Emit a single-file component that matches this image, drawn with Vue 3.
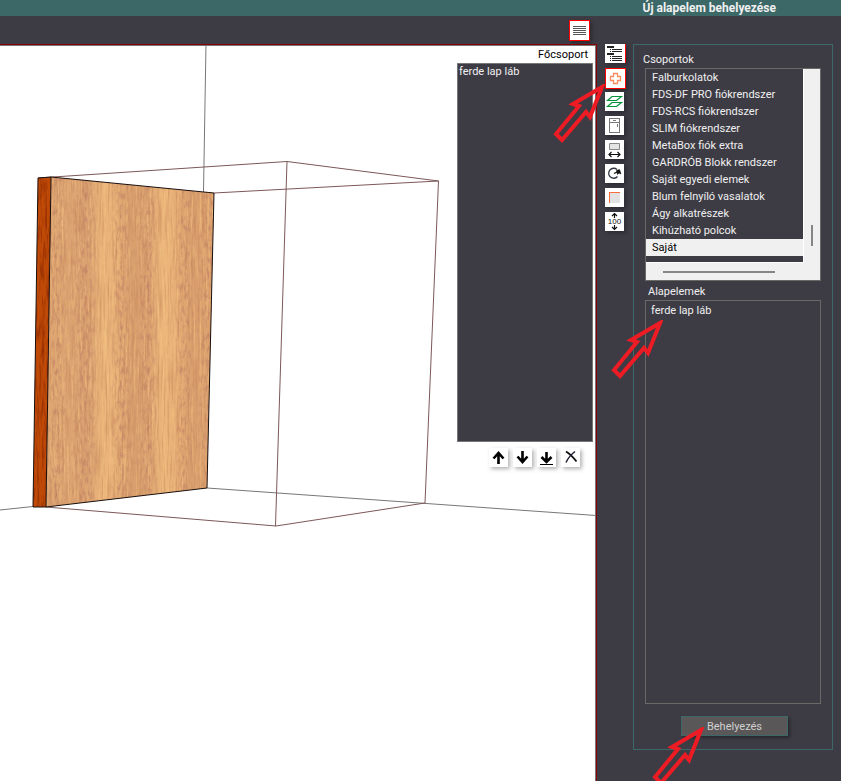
<script setup>
import { ref } from 'vue'

const groups = [
  'Falburkolatok',
  'FDS-DF PRO fiókrendszer',
  'FDS-RCS fiókrendszer',
  'SLIM fiókrendszer',
  'MetaBox fiók extra',
  'GARDRÓB Blokk rendszer',
  'Saját egyedi elemek',
  'Blum felnyíló vasalatok',
  'Ágy alkatrészek',
  'Kihúzható polcok',
  'Saját',
]
const selected = ref('Saját')
const pointer = 'M49 3 L20 20 L26 22 L3 50 L9 56 L33 28 L37 33 Z'
</script>

<template>
  <div class="app">
    <header class="title-bar"><h1>Új alapelem behelyezése</h1></header>

    <div class="toolbar">
      <button class="tool framed" type="button" aria-label="Menü">
        <svg viewBox="0 0 19 19" shape-rendering="crispEdges">
          <path d="M3 5.5h13M3 7.5h13M3 9.5h13M3 11.5h13M3 13.5h13" stroke="#555" />
        </svg>
      </button>
    </div>

    <main class="work">
      <section class="viewport">
        <svg class="scene" viewBox="0 46 595 735" preserveAspectRatio="xMinYMin slice">
          <defs>
            <linearGradient id="oak" x1="46" x2="214" y1="0" y2="0" gradientUnits="userSpaceOnUse">
              <stop offset="0" stop-color="#dfa872" />
              <stop offset=".13" stop-color="#dda572" />
              <stop offset=".25" stop-color="#d9a070" />
              <stop offset=".35" stop-color="#edb87c" />
              <stop offset=".41" stop-color="#e8b178" />
              <stop offset=".5" stop-color="#d89f6d" />
              <stop offset=".61" stop-color="#dba270" />
              <stop offset=".7" stop-color="#eeb97c" />
              <stop offset=".77" stop-color="#e8b077" />
              <stop offset=".86" stop-color="#d99f6d" />
              <stop offset="1" stop-color="#dfa570" />
            </linearGradient>
            <linearGradient id="bands" x1="46" x2="214" y1="0" y2="0" gradientUnits="userSpaceOnUse">
              <stop offset="0" stop-color="#fff" stop-opacity=".2" />
              <stop offset=".06" stop-color="#fff" stop-opacity=".8" />
              <stop offset=".13" stop-color="#fff" stop-opacity=".2" />
              <stop offset=".24" stop-color="#fff" stop-opacity=".8" />
              <stop offset=".31" stop-color="#fff" stop-opacity=".1" />
              <stop offset=".38" stop-color="#fff" stop-opacity=".1" />
              <stop offset=".45" stop-color="#fff" stop-opacity=".8" />
              <stop offset=".53" stop-color="#fff" stop-opacity=".2" />
              <stop offset=".61" stop-color="#fff" stop-opacity=".8" />
              <stop offset=".67" stop-color="#fff" stop-opacity=".1" />
              <stop offset=".76" stop-color="#fff" stop-opacity=".1" />
              <stop offset=".82" stop-color="#fff" stop-opacity=".8" />
              <stop offset=".89" stop-color="#fff" stop-opacity=".2" />
              <stop offset=".97" stop-color="#fff" stop-opacity=".8" />
            </linearGradient>
            <mask id="band-mask"><rect x="44" y="175" width="172" height="334" fill="url(#bands)" /></mask>
            <filter id="grain" x="0" y="0" width="100%" height="100%" color-interpolation-filters="sRGB">
              <feTurbulence type="fractalNoise" baseFrequency=".4 .12" numOctaves="3" seed="8" />
              <feColorMatrix values="0 0 0 0 .75  0 0 0 0 .5  0 0 0 0 .39  3 0 0 0 -1.35" />
            </filter>
            <filter id="fibre" x="0" y="0" width="100%" height="100%" color-interpolation-filters="sRGB">
              <feTurbulence type="fractalNoise" baseFrequency=".5 .025" numOctaves="2" seed="21" result="n" />
              <feColorMatrix in="n" values="0 0 0 0 .97  0 0 0 0 .78  0 0 0 0 .52  1.6 0 0 0 -.75" result="light" />
              <feColorMatrix in="n" values="0 0 0 0 .78  0 0 0 0 .53  0 0 0 0 .36  0 1.6 0 0 -.75" result="dark" />
              <feMerge><feMergeNode in="light" /><feMergeNode in="dark" /></feMerge>
            </filter>
            <filter id="edge-grain" x="0" y="0" width="100%" height="100%" color-interpolation-filters="sRGB">
              <feTurbulence type="fractalNoise" baseFrequency=".4 .05" numOctaves="3" seed="4" />
              <feColorMatrix values="0 0 0 0 .5  0 0 0 0 .13  0 0 0 0 0  1.8 0 0 0 -.8" />
            </filter>
            <clipPath id="face"><path d="M51 177 L214 193 L207 488 L46 507Z" /></clipPath>
            <clipPath id="side"><path d="M38 178 L51 177 L46 507 L33 507Z" /></clipPath>
          </defs>
          <g fill="none" stroke="#777" stroke-width="1">
            <path d="M206 44 L203.500 192M207 488 L596 515.500M0 510 L33 506.500" />
          </g>
          <g fill="none" stroke="#7d5759" stroke-width="1">
            <path d="M38 178 L287 161.500 L438.500 181 L425 503 L276 526 L46 507M287 161.500 L275.500 526M214 193 L438.500 181" />
          </g>
          <g clip-path="url(#face)">
            <rect x="44" y="175" width="172" height="334" fill="url(#oak)" />
            <rect x="44" y="175" width="172" height="334" filter="url(#fibre)" />
            <g mask="url(#band-mask)">
              <rect x="44" y="175" width="172" height="334" filter="url(#grain)" />
            </g>
          </g>
          <g clip-path="url(#side)">
            <rect x="32" y="175" width="20" height="334" fill="#bf4906" />
            <rect x="32" y="175" width="20" height="334" filter="url(#edge-grain)" />
          </g>
          <path d="M38 178 L51 177 L214 193 L207 488 L46 507 L33 507 Z M51 177 L46 507" fill="none" stroke="#1a1010" stroke-width="1" />
        </svg>

        <aside class="overlay">
          <h2 id="main-group">Főcsoport</h2>
          <ul class="part-list" role="listbox" aria-labelledby="main-group">
            <li role="option">ferde lap láb</li>
          </ul>
          <div class="moves">
            <button class="tool" type="button" aria-label="Fel">
              <svg viewBox="0 0 19 19"><path d="M9.500 16V5M4.500 10.500L9.500 5L14.500 10.500" fill="none" stroke="#000" stroke-width="2.600" /></svg>
            </button>
            <button class="tool" type="button" aria-label="Le">
              <svg viewBox="0 0 19 19"><path d="M9.500 3V14M4.500 8.500L9.500 14L14.500 8.500" fill="none" stroke="#000" stroke-width="2.600" /></svg>
            </button>
            <button class="tool" type="button" aria-label="Legalulra">
              <svg viewBox="0 0 19 19"><path d="M9.500 4V14M4.500 9L9.500 14L14.500 9" fill="none" stroke="#000" stroke-width="2.600" /><path d="M3 16.500H16" stroke="#000" /></svg>
            </button>
            <button class="tool" type="button" aria-label="Törlés">
              <svg viewBox="0 0 19 19"><path d="M5 3.500Q10 6.500 15.500 13.500" fill="none" stroke="#111" stroke-width="1.800" /><path d="M14 3.500Q8 8 5 14.500" fill="none" stroke="#223" stroke-width="1.500" /></svg>
            </button>
          </div>
        </aside>
      </section>

      <nav class="tools">
        <button class="tool flagged" type="button" aria-label="Szerkezet">
          <svg viewBox="0 0 19 19" shape-rendering="crispEdges">
            <path d="M2 2h7v2H2zM2 9h7v2H2z" fill="#222" />
            <path d="M5 5.500h1M7 5.500h10M5 7.500h1M7 7.500h10M5 12.500h1M7 12.500h10M5 14.500h1M7 14.500h10M5 16.500h1M7 16.500h10" stroke="#222" />
          </svg>
        </button>
        <button class="tool framed" type="button" aria-label="Új elem">
          <svg viewBox="0 0 19 19"><path d="M7.500 4.500h4v3h3v4h-3v3h-4v-3h-3v-4h3z" fill="none" stroke="#f98d60" stroke-width="1.300" /></svg>
          <svg class="pointer" viewBox="0 0 52 60" aria-hidden="true"><path :d="pointer" /></svg>
        </button>
        <button class="tool" type="button" aria-label="Lapok">
          <svg viewBox="0 0 19 19"><path d="M7 4.500H16.500L11.500 8.500H2.500ZM7 10.500H16.500L11.500 14.500H2.500Z" fill="none" stroke="#079338" stroke-width="1.200" /></svg>
        </button>
        <button class="tool" type="button" aria-label="Szekrény">
          <svg viewBox="0 0 19 19" shape-rendering="crispEdges"><path d="M4.500 2.500h10v14h-10zM4.500 6.500h10M8 4.500h3M12.500 8v3" fill="none" stroke="#777" /></svg>
        </button>
        <button class="tool" type="button" aria-label="Szélesség">
          <svg viewBox="0 0 19 19"><path d="M4.500 3.500h10v6h-10z" fill="#e4e4e4" stroke="#888" /><path d="M4.500 14.500h10M6.500 12L4 14.500L6.500 17M12.500 12L15 14.500L12.500 17" fill="none" stroke="#111" stroke-width="1.200" /></svg>
        </button>
        <button class="tool" type="button" aria-label="Forgatás">
          <svg viewBox="0 0 19 19"><path d="M12 5.500A5 5 0 1 0 12.500 12.500" fill="none" stroke="#333844" stroke-width="1.300" /><path d="M9 9.500L13 7.500" stroke="#111" stroke-width="1.300" /><path d="M11.500 6.500L14.500 5.500L16 10L14 9L12.500 10.500Z" fill="#111" stroke="#111" stroke-width=".6" /></svg>
        </button>
        <button class="tool" type="button" aria-label="Élzárás">
          <svg viewBox="0 0 19 19" shape-rendering="crispEdges"><path d="M5 5h10v10H5z" fill="#e2e2e2" /><path d="M4.500 15V4.500H15" fill="none" stroke="#fa6b3c" /></svg>
        </button>
        <button class="tool" type="button" aria-label="Méret">
          <svg viewBox="0 0 19 19"><path d="M9.500 1.500V6M7 4L9.500 1.500L12 4M9.500 13V17.500M7 15L9.500 17.500L12 15" fill="none" stroke="#111" stroke-width="1.200" /><text x="9.500" y="12" text-anchor="middle">100</text></svg>
        </button>
      </nav>

      <section class="panel">
        <h2 id="groups-label">Csoportok</h2>
        <div class="group-box">
          <ul class="groups" role="listbox" aria-labelledby="groups-label">
            <li
              v-for="g in groups"
              :key="g"
              role="option"
              :aria-selected="g === selected"
              :class="{ active: g === selected }"
              @click="selected = g"
            >{{ g }}</li>
          </ul>
          <div class="track vertical"><span class="thumb"></span></div>
          <div class="track horizontal"><span class="thumb"></span></div>
        </div>
        <h2 id="items-label" class="indent">Alapelemek</h2>
        <ul class="items" role="listbox" aria-labelledby="items-label">
          <li role="option">
            ferde lap láb
            <svg class="pointer" viewBox="0 0 52 60" aria-hidden="true"><path :d="pointer" /></svg>
          </li>
        </ul>
        <button class="insert" type="button">
          Behelyezés
          <svg class="pointer" viewBox="0 0 52 60" aria-hidden="true"><path :d="pointer" /></svg>
        </button>
      </section>
    </main>
  </div>
</template>

<style>
body {
  margin: 0;
  background: #3d3c45;
}
</style>

<style scoped>
* {
  box-sizing: border-box;
}
.app {
  display: flex;
  flex-direction: column;
  height: 100vh;
  overflow: hidden;
  background: #3d3c45;
  color: #f0f0f0;
  font: 11px/17px Roboto, "Liberation Sans", sans-serif;
}
h1,
h2,
ul {
  margin: 0;
  padding: 0;
  font-size: inherit;
  font-weight: normal;
  list-style: none;
}
.title-bar {
  display: flex;
  justify-content: flex-end;
  height: 16px;
  padding-right: 65px;
  background: #3c6868;
}
.title-bar h1 {
  font-size: 12px;
  font-weight: bold;
}
.toolbar {
  display: flex;
  justify-content: flex-end;
  height: 28px;
  padding: 4px 251px 0 0;
}
.tool {
  position: relative;
  display: block;
  flex: none;
  width: 19px;
  height: 19px;
  padding: 0;
  border: 0;
  background: #fff;
  box-shadow: 2px 2px 4px rgba(0, 0, 0, 0.3);
}
.tool > svg:first-child {
  display: block;
  width: 19px;
  height: 19px;
}
.tool text {
  font: 8px "Liberation Sans", sans-serif;
  fill: #111;
}
.framed {
  width: 21px;
  height: 21px;
  border: 1px solid #f00;
  margin-bottom: -2px;
}
.flagged {
  width: 21px;
  border-right: 1px solid #f00;
}
.work {
  display: grid;
  grid-template-columns: minmax(0, 1fr) 36px 200px;
  flex: 1;
  min-height: 0;
  padding-right: 8px;
}
.viewport {
  position: relative;
  display: flex;
  justify-content: flex-end;
  min-height: 0;
  border: solid #850000;
  border-width: 1px 1px 0 0;
  background: #fff;
  box-shadow: inset -1px 1px #777;
}
.scene {
  position: absolute;
  inset: 1px 1px 0 0;
  width: calc(100% - 1px);
  height: calc(100% - 1px);
}
.overlay {
  position: relative;
  width: 136px;
  margin: 1px 3px 0 0;
  color: #000;
}
.overlay h2 {
  padding-right: 5px;
  text-align: right;
}
.part-list {
  height: 379px;
  padding-left: 1px;
  border: 1px solid #777;
  background: #3d3c45;
  color: #f0f0f0;
  line-height: 15px;
}
.moves {
  display: flex;
  justify-content: flex-end;
  gap: 5px;
  padding: 6px 13px 0 0;
}
.tools {
  display: flex;
  flex-direction: column;
  gap: 5px;
  padding-left: 8px;
}
.panel {
  display: flex;
  flex-direction: column;
  min-height: 0;
  margin-bottom: 31px;
  padding: 6px 11px 14px;
  border: 1px solid #3c6868;
}
.panel h2 {
  margin-left: -2px;
}
.panel .indent {
  margin: 2px 0 0 3px;
}
.group-box {
  display: grid;
  grid-template-columns: minmax(0, 1fr) 16px;
  grid-template-rows: 194px 17px;
  flex: none;
  border: 1px solid #696966;
  background: #f0f0f0;
}
.groups {
  border: solid #fff;
  border-width: 0 1px 1px 0;
  background: #3d3c45;
}
.groups li {
  padding-left: 6px;
}
.active {
  background: #f0f0f0;
  color: #000;
}
.track {
  display: flex;
}
.vertical {
  justify-content: center;
  padding-top: 156px;
}
.horizontal {
  padding: 8px 29px 0 17px;
}
.thumb {
  background: #868686;
}
.vertical .thumb {
  width: 2px;
  height: 21px;
}
.horizontal .thumb {
  flex: 1;
  height: 2px;
}
.items {
  flex: 1;
  min-height: 0;
  padding-top: 1px;
  border: 1px solid #696966;
}
.items li {
  position: relative;
  padding-left: 5px;
}
.insert {
  position: relative;
  flex: none;
  align-self: flex-end;
  width: 107px;
  height: 20px;
  margin: 12px 33px 0 0;
  padding: 0;
  border: 1px solid #3c6868;
  background: #5a5758;
  box-shadow: 2px 2px 3px rgba(0, 0, 0, 0.35);
  color: #d0d0d0;
  font: inherit;
}
.panel {
  padding-bottom: 13px;
}
.pointer {
  position: absolute;
  z-index: 2;
  width: 52px;
  height: 60px;
  fill: none;
  stroke: #ed1c24;
  stroke-width: 4;
  pointer-events: none;
}
.tool .pointer {
  top: 15px;
  right: 20px;
}
.items .pointer {
  top: 18px;
  left: -35px;
}
.insert .pointer {
  top: 10px;
  left: -30px;
}
</style>
